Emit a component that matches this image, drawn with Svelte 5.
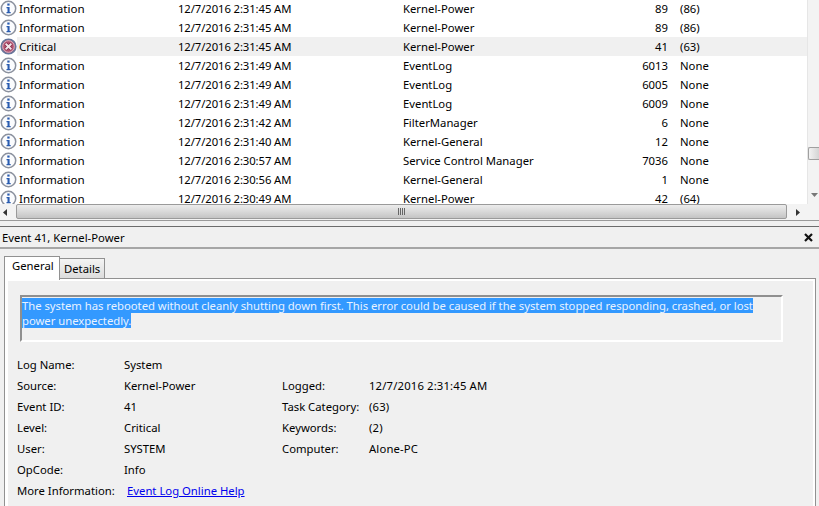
<script>
  const rows = [
    { level: "Information", date: "12/7/2016 2:31:45 AM", source: "Kernel-Power", id: "89", task: "(86)" },
    { level: "Information", date: "12/7/2016 2:31:45 AM", source: "Kernel-Power", id: "89", task: "(86)" },
    { level: "Critical", date: "12/7/2016 2:31:45 AM", source: "Kernel-Power", id: "41", task: "(63)" },
    { level: "Information", date: "12/7/2016 2:31:49 AM", source: "EventLog", id: "6013", task: "None" },
    { level: "Information", date: "12/7/2016 2:31:49 AM", source: "EventLog", id: "6005", task: "None" },
    { level: "Information", date: "12/7/2016 2:31:49 AM", source: "EventLog", id: "6009", task: "None" },
    { level: "Information", date: "12/7/2016 2:31:42 AM", source: "FilterManager", id: "6", task: "None" },
    { level: "Information", date: "12/7/2016 2:31:40 AM", source: "Kernel-General", id: "12", task: "None" },
    { level: "Information", date: "12/7/2016 2:30:57 AM", source: "Service Control Manager", id: "7036", task: "None" },
    { level: "Information", date: "12/7/2016 2:30:56 AM", source: "Kernel-General", id: "1", task: "None" },
    { level: "Information", date: "12/7/2016 2:30:49 AM", source: "Kernel-Power", id: "42", task: "(64)" }
  ];

  const leftFields = [
    ["Source:", "Kernel-Power"],
    ["Event ID:", "41"],
    ["Level:", "Critical"],
    ["User:", "SYSTEM"],
    ["OpCode:", "Info"]
  ];

  const rightFields = [
    ["Logged:", "12/7/2016 2:31:45 AM"],
    ["Task Category:", "(63)"],
    ["Keywords:", "(2)"],
    ["Computer:", "Alone-PC"]
  ];
</script>

<div class="window">
  <div class="top">
    <div class="list-wrap">
      <div class="list">
        {#each rows as row}
          <div class="row" class:selected={row.level === "Critical"}>
            <div class="cell-level">
              {#if row.level === "Critical"}
                <svg class="icon" viewBox="0 0 17 17">
                  <circle cx="8.5" cy="8.5" r="7.3" fill="#b4516f" stroke="#66779c" stroke-width="1.6" />
                  <circle cx="8.5" cy="8.5" r="5.8" fill="none" stroke="#d9c3d0" stroke-width="0.9" />
                  <path d="M5.7 5.700l5.600 5.600M11.300 5.700l-5.600 5.600" stroke="#7d2745" stroke-width="3.400" />
                  <path d="M5.700 5.700l5.600 5.600M11.300 5.700l-5.600 5.600" stroke="#f0e3e8" stroke-width="2" />
                </svg>
              {:else}
                <svg class="icon" viewBox="0 0 17 17">
                  <circle cx="8.5" cy="8.5" r="7.2" fill="#fbfcfe" stroke="#8b919e" stroke-width="1.5" />
                  <rect x="7.300" y="3.500" width="2.300" height="2.100" fill="#2a5cb0" />
                  <path d="M6.500 6.900h3.100v5h1.100v1.300H6.500v-1.300h1V8.200h-1z" fill="#2a5cb0" />
                </svg>
              {/if}
              <span class="level-text">{row.level}</span>
            </div>
            <span class="cell-date">{row.date}</span>
            <span class="cell-source">{row.source}</span>
            <span class="cell-id">{row.id}</span>
            <span class="cell-task">{row.task}</span>
          </div>
        {/each}
      </div>
      <div class="vscroll">
        <svg class="v-arrow" viewBox="0 0 7 4"><path d="M0 0h7L3.500 4z" fill="#777" /></svg>
        <div class="v-thumb"></div>
      </div>
    </div>
    <div class="hscroll">
      <div class="h-btn"><svg viewBox="0 0 4 7"><path d="M4 0v7L0 3.500z" fill="#333" /></svg></div>
      <div class="h-thumb">
        <div class="grip"><i></i><i></i><i></i><i></i></div>
      </div>
      <div class="h-btn right"><svg viewBox="0 0 4 7"><path d="M0 0v7l4-3.500z" fill="#333" /></svg></div>
    </div>
  </div>

  <div class="splitter"></div>

  <div class="pane-header">
    <span>Event 41, Kernel-Power</span>
    <svg class="close" viewBox="0 0 9 9"><path d="M1 1l7 7M8 1l-7 7" stroke="#111" stroke-width="2.200" /></svg>
  </div>

  <div class="tabs">
    <div class="tab active">General</div>
    <div class="tab">Details</div>
  </div>

  <div class="panel">
    <div class="message">
      <span class="highlight">The system has rebooted without cleanly shutting down first. This error could be caused if the system stopped responding, crashed, or lost power unexpectedly.</span>
    </div>

    <div class="field">
      <span class="label">Log Name:</span>
      <span>System</span>
    </div>
    <div class="columns">
      <div class="col-left">
        {#each leftFields as f}
          <div class="field">
            <span class="label">{f[0]}</span>
            <span>{f[1]}</span>
          </div>
        {/each}
      </div>
      <div class="col-right">
        {#each rightFields as f}
          <div class="field">
            <span class="label-right">{f[0]}</span>
            <span class="value-right">{f[1]}</span>
          </div>
        {/each}
      </div>
    </div>
    <div class="field">
      <span class="label more">More Information:</span>
      <a href="#help" class="link">Event Log Online Help</a>
    </div>
  </div>
</div>

<style>
  :global(body) {
    margin: 0;
    background: #f0f0f0;
  }

  .window {
    width: 819px;
    height: 506px;
    overflow: hidden;
    font-family: "Noto Sans", "Open Sans", sans-serif;
    font-size: 11.3px;
    color: #000;
    background: #f0f0f0;
  }

  .top {
    background: #fff;
  }

  .list-wrap {
    display: flex;
    height: 204px;
  }

  .list {
    flex: 1;
    overflow: hidden;
  }

  .row {
    display: flex;
    align-items: center;
    height: 19px;
    box-sizing: border-box;
    padding-bottom: 1px;
    position: relative;
    top: -1px;
    white-space: nowrap;
  }

  .selected {
    background: linear-gradient(to right, #fff 17px, #f0f0f0 17px);
  }

  .cell-level {
    display: flex;
    align-items: center;
    width: 178px;
    flex-shrink: 0;
  }

  .icon {
    width: 17px;
    height: 17px;
    flex-shrink: 0;
  }

  .level-text {
    margin-left: 2px;
    font-size: 11.6px;
  }

  .cell-date {
    width: 225px;
    flex-shrink: 0;
    letter-spacing: -0.1px;
  }

  .cell-source {
    width: 220px;
    flex-shrink: 0;
  }

  .cell-id {
    width: 45px;
    text-align: right;
    flex-shrink: 0;
  }

  .cell-task {
    margin-left: 12px;
  }

  .vscroll {
    width: 12px;
    background: #f3f3f3;
    position: relative;
    border-left: 1px solid #e6e6e6;
    box-sizing: border-box;
  }

  .v-thumb {
    position: absolute;
    left: 0;
    right: 0;
    top: 147px;
    height: 13px;
    box-sizing: border-box;
    background: linear-gradient(to right, #f2f2f2, #d4d4d4);
    border: 1px solid #a0a0a0;
    border-right: none;
    border-radius: 2px 0 0 2px;
  }

  .v-arrow {
    position: absolute;
    left: 3px;
    top: 193px;
    width: 7px;
    height: 4px;
  }

  .hscroll {
    display: flex;
    height: 16px;
    background: #f3f3f3;
  }

  .h-btn {
    width: 16px;
    display: flex;
    align-items: center;
    padding-left: 3px;
    box-sizing: border-box;
    flex-shrink: 0;
  }

  .h-btn.right {
    width: 22px;
    padding-left: 9px;
  }

  .h-btn svg {
    width: 4px;
    height: 7px;
  }

  .h-thumb {
    width: 771px;
    height: 15px;
    display: flex;
    align-items: center;
    justify-content: center;
    background: linear-gradient(to bottom, #ececec, #d9d9d9 50%, #c4c4c4);
    border: 1px solid #9a9a9a;
    border-radius: 2px;
    box-sizing: border-box;
  }

  .grip {
    display: flex;
    gap: 1px;
  }

  .grip i {
    width: 1px;
    height: 7px;
    background: #666;
  }

  .splitter {
    height: 7px;
    box-sizing: border-box;
    background: #f0f0f0;
    border-top: 1px solid #9a9a9a;
    border-bottom: 1px solid #6c6c6c;
  }

  .pane-header {
    display: flex;
    align-items: center;
    justify-content: space-between;
    height: 22px;
    padding: 0 6px 0 2px;
    border-bottom: 2px solid #a6a6a6;
    box-sizing: border-box;
  }

  .close {
    width: 9px;
    height: 9px;
  }

  .tabs {
    display: flex;
    align-items: flex-end;
    height: 29px;
    padding-left: 4px;
    box-sizing: border-box;
  }

  .tab {
    padding: 0 4px;
    height: 20px;
    line-height: 19px;
    box-sizing: border-box;
    border: 1px solid #919191;
    border-bottom: none;
    border-left: none;
    background: linear-gradient(to bottom, #f4f4f4, #dcdcdc);
  }

  .tab.active {
    width: 56px;
    height: 24px;
    line-height: 18px;
    padding: 0 0 0 7px;
    background: #fff;
    border-left: 1px solid #919191;
    margin-bottom: -2px;
    position: relative;
    z-index: 1;
  }

  .panel {
    margin-left: 4px;
    width: 812px;
    height: 240px;
    background: #f0f0f0;
    border: 1px solid #919191;
    box-shadow: inset 3px 2px 0 #fff, inset -2px 0 0 #fff;
    box-sizing: border-box;
    padding: 16px 0 0 12px;
  }

  .message {
    width: 763px;
    height: 47px;
    margin-left: 3px;
    box-sizing: border-box;
    background: #f0f0f0;
    border: 2px solid #8f8f8f;
    border-right-color: #fff;
    border-bottom-color: #fff;
    padding: 1px 0 0 0;
    line-height: 15px;
    letter-spacing: -0.03px;
    margin-bottom: 12px;
  }

  .highlight {
    background: #3399ff;
    color: #e8f2ff;
    box-decoration-break: clone;
  }

  .field {
    display: flex;
    height: 21px;
    line-height: 21px;
    white-space: nowrap;
  }

  .label {
    width: 107px;
    flex-shrink: 0;
  }

  .more {
    width: 110px;
  }

  .label-right {
    width: 87px;
    flex-shrink: 0;
  }

  .value-right {
    letter-spacing: 0.15px;
  }

  .columns {
    display: flex;
  }

  .col-left {
    width: 265px;
  }

  .link {
    color: #0000ee;
    text-decoration: underline;
  }
</style>
